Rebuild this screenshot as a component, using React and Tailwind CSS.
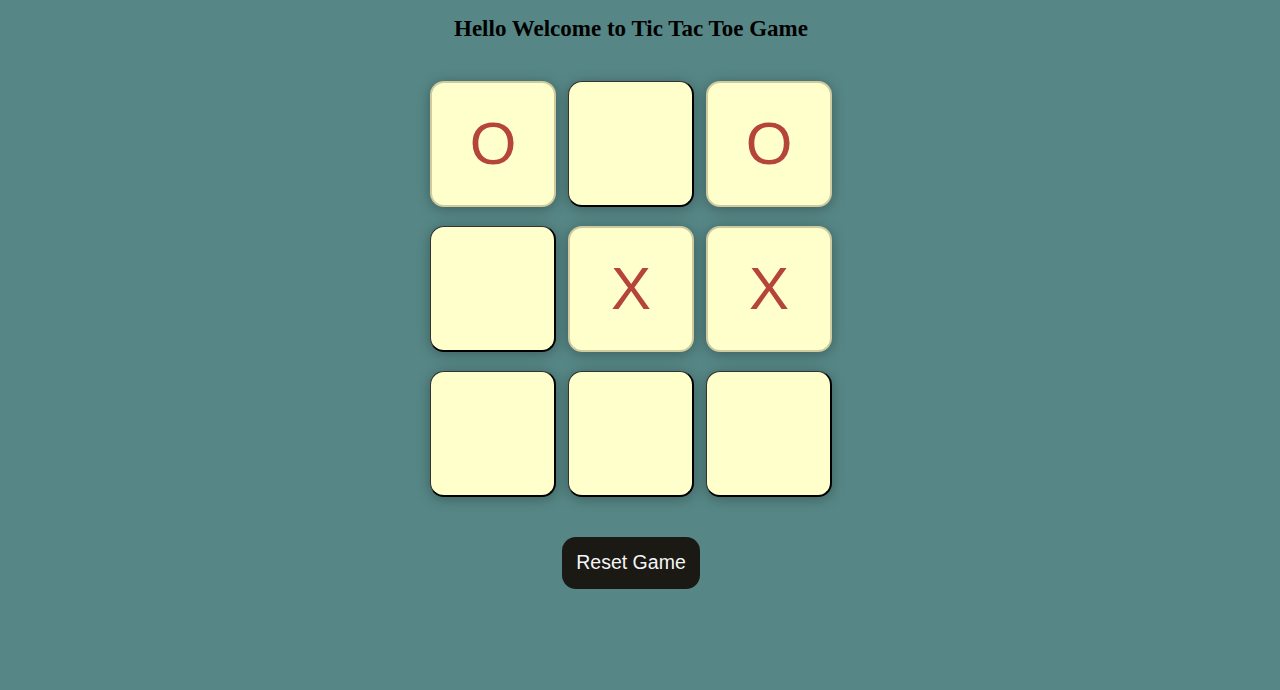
import React from "react";

const board = ["O", "", "O", "", "X", "X", "", "", ""];

export default function App() {
  return (
    <div className="min-h-[690px] w-full bg-[#568786] flex flex-col items-center pr-[18px]">
      <h2
        className="mt-[15px] text-[23px] font-bold leading-[28px] text-black"
        style={{ fontFamily: '"Liberation Serif", "Times New Roman", serif' }}
      >
        Hello Welcome to Tic Tac Toe Game
      </h2>
      <div className="mt-[38px] grid grid-cols-[126px_126px_126px] gap-x-[12px] gap-y-[19px]">
        {board.map((v, i) =>
          v ? (
            <div
              key={i}
              className="w-[126px] h-[126px] rounded-[14px] bg-[#ffffcc] border-2 border-[#cfcb9e] shadow-[0_2px_14px_rgba(0,0,0,0.3)] flex items-center justify-center text-[60px] text-[#b5443b] leading-none"
              style={{ fontFamily: '"Liberation Sans", Arial, sans-serif' }}
            >
              <span className="-mt-[1px]">{v}</span>
            </div>
          ) : (
            <div
              key={i}
              className="w-[126px] h-[126px] rounded-[14px] bg-[#ffffcc] border border-[#333] border-r-2 border-b-2 border-r-black border-b-black shadow-[0_2px_14px_rgba(0,0,0,0.3)]"
            />
          )
        )}
      </div>
      <button
        className="mt-[40px] h-[52px] w-[138px] rounded-[14px] bg-[#1a1914] text-[#f5f5f5] text-[19.5px]"
        style={{ fontFamily: '"Liberation Sans", Arial, sans-serif' }}
      >
        Reset Game
      </button>
    </div>
  );
}
